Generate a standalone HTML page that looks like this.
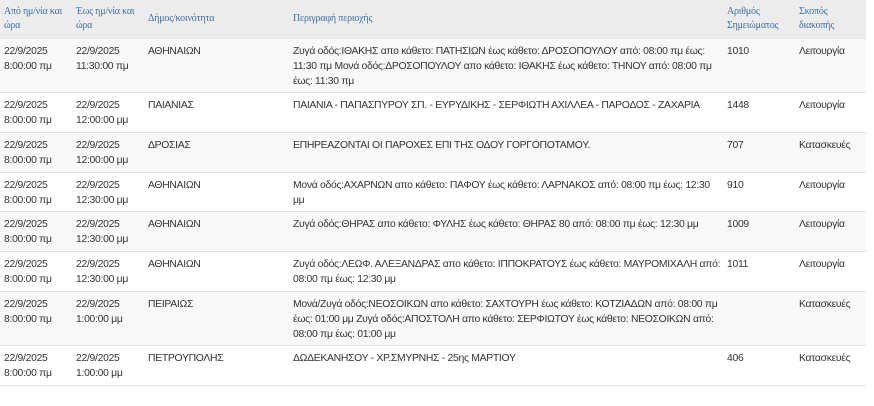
<!DOCTYPE html>
<html><head><meta charset="utf-8"><style>
body{margin:0;background:#fff;width:874px;height:406px;overflow:hidden;font-family:"Liberation Sans","DejaVu Sans",sans-serif;}
table{position:absolute;left:0;top:0;width:866px;border-collapse:collapse;table-layout:fixed;}
td,th{vertical-align:top;padding:5px 4px 3px 4px;font-size:10.4px;letter-spacing:-0.3px;line-height:15px;color:#333;text-align:left;font-weight:normal;overflow:hidden;}
td.d{white-space:nowrap;}
th{font-family:"Liberation Serif",serif;font-size:10px;letter-spacing:-0.2px;line-height:14px;color:#3d6fa5;background:#ececec;padding:5px 4px;height:27px;}
tr{border-bottom:1px solid #e4e4e4;}
tr.o td{background:#f8f8f8;}
</style></head><body>
<table>
<colgroup><col style="width:72px"><col style="width:72px"><col style="width:145px"><col style="width:434px"><col style="width:72px"><col style="width:71px"></colgroup>
<tr><th>Από ημ/νία και ώρα</th><th>Έως ημ/νία και ώρα</th><th style="vertical-align:middle">Δήμος/κοινότητα</th><th style="vertical-align:middle">Περιγραφή περιοχής</th><th>Αριθμός Σημειώματος</th><th>Σκοπός διακοπής</th></tr>
<tr class="o" style="height:54px"><td>22/9/2025 8:00:00 πμ</td><td>22/9/2025 11:30:00 πμ</td><td>ΑΘΗΝΑΙΩΝ</td><td class="d">Ζυγά οδός:ΙΘΑΚΗΣ απο κάθετο: ΠΑΤΗΣΙΩΝ έως κάθετο: ΔΡΟΣΟΠΟΥΛΟΥ από: 08:00 πμ έως:<br>11:30 πμ Μονά οδός:ΔΡΟΣΟΠΟΥΛΟΥ απο κάθετο: ΙΘΑΚΗΣ έως κάθετο: ΤΗΝΟΥ από: 08:00 πμ<br>έως: 11:30 πμ</td><td>1010</td><td>Λειτουργία</td></tr>
<tr style="height:40px"><td>22/9/2025 8:00:00 πμ</td><td>22/9/2025 12:00:00 μμ</td><td>ΠΑΙΑΝΙΑΣ</td><td class="d">ΠΑΙΑΝΙΑ - ΠΑΠΑΣΠΥΡΟΥ ΣΠ. - ΕΥΡΥΔΙΚΗΣ - ΣΕΡΦΙΩΤΗ ΑΧΙΛΛΕΑ - ΠΑΡΟΔΟΣ - ΖΑΧΑΡΙΑ</td><td>1448</td><td>Λειτουργία</td></tr>
<tr class="o" style="height:40px"><td>22/9/2025 8:00:00 πμ</td><td>22/9/2025 12:00:00 μμ</td><td>ΔΡΟΣΙΑΣ</td><td class="d">ΕΠΗΡΕΑΖΟΝΤΑΙ ΟΙ ΠΑΡΟΧΕΣ ΕΠΙ ΤΗΣ ΟΔΟΥ ΓΟΡΓΟΠΟΤΑΜΟΥ.</td><td>707</td><td>Κατασκευές</td></tr>
<tr style="height:39px"><td>22/9/2025 8:00:00 πμ</td><td>22/9/2025 12:30:00 μμ</td><td>ΑΘΗΝΑΙΩΝ</td><td class="d">Μονά οδός:ΑΧΑΡΝΩΝ απο κάθετο: ΠΑΦΟΥ έως κάθετο: ΛΑΡΝΑΚΟΣ από: 08:00 πμ έως: 12:30<br>μμ</td><td>910</td><td>Λειτουργία</td></tr>
<tr class="o" style="height:40px"><td>22/9/2025 8:00:00 πμ</td><td>22/9/2025 12:30:00 μμ</td><td>ΑΘΗΝΑΙΩΝ</td><td class="d">Ζυγά οδός:ΘΗΡΑΣ απο κάθετο: ΦΥΛΗΣ έως κάθετο: ΘΗΡΑΣ 80 από: 08:00 πμ έως: 12:30 μμ</td><td>1009</td><td>Λειτουργία</td></tr>
<tr style="height:40px"><td>22/9/2025 8:00:00 πμ</td><td>22/9/2025 12:30:00 μμ</td><td>ΑΘΗΝΑΙΩΝ</td><td class="d">Ζυγά οδός:ΛΕΩΦ. ΑΛΕΞΑΝΔΡΑΣ απο κάθετο: ΙΠΠΟΚΡΑΤΟΥΣ έως κάθετο: ΜΑΥΡΟΜΙΧΑΛΗ από:<br>08:00 πμ έως: 12:30 μμ</td><td>1011</td><td>Λειτουργία</td></tr>
<tr class="o" style="height:53px"><td>22/9/2025 8:00:00 πμ</td><td>22/9/2025 1:00:00 μμ</td><td>ΠΕΙΡΑΙΩΣ</td><td class="d">Μονά/Ζυγά οδός:ΝΕΟΣΟΙΚΩΝ απο κάθετο: ΣΑΧΤΟΥΡΗ έως κάθετο: ΚΟΤΖΙΑΔΩΝ από: 08:00 πμ<br>έως: 01:00 μμ Ζυγά οδός:ΑΠΟΣΤΟΛΗ απο κάθετο: ΣΕΡΦΙΩΤΟΥ έως κάθετο: ΝΕΟΣΟΙΚΩΝ από:<br>08:00 πμ έως: 01:00 μμ</td><td></td><td>Κατασκευές</td></tr>
<tr style="height:40px"><td>22/9/2025 8:00:00 πμ</td><td>22/9/2025 1:00:00 μμ</td><td>ΠΕΤΡΟΥΠΟΛΗΣ</td><td class="d">ΔΩΔΕΚΑΝΗΣΟΥ - ΧΡ.ΣΜΥΡΝΗΣ - 25ης ΜΑΡΤΙΟΥ</td><td>406</td><td>Κατασκευές</td></tr>
</table>
</body></html>
